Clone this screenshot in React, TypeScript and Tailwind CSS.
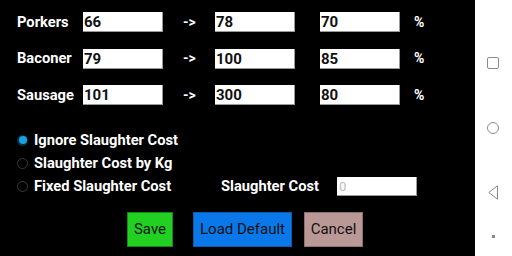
import React from 'react';

const rows = [
  { label: 'Porkers', from: '66', to: '78', pct: '70' },
  { label: 'Baconer', from: '79', to: '100', pct: '85' },
  { label: 'Sausage', from: '101', to: '300', pct: '80' },
];

const Field: React.FC<{ value: string; className?: string }> = ({ value, className = '' }) => (
  <div
    className={`h-5 w-20 bg-white border-b border-r border-[#9a9a9a] pl-px text-[15px] font-bold leading-5 text-[#111] ${className}`}
  >
    {value}
  </div>
);

const Radio: React.FC<{ checked?: boolean; label: string }> = ({ checked, label }) => (
  <div className="flex items-center gap-[6px]">
    {checked ? (
      <span className="flex h-[11px] w-[11px] items-center justify-center rounded-full bg-[#0b2f3f]">
        <span className="h-[8px] w-[8px] rounded-full bg-[#1aa0e0]" />
      </span>
    ) : (
      <span className="h-[11px] w-[11px] rounded-full border border-[#3a3a3a]" />
    )}
    <span className="text-[14.7px] font-bold text-white">{label}</span>
  </div>
);

export default function App() {
  return (
    <div className="flex h-[256px] w-[512px] font-['Roboto',sans-serif]">
      <div className="flex w-[475px] flex-col bg-black pl-[17px] pt-[12px]">
        <div className="flex flex-col gap-[16.5px]">
          {rows.map((r) => (
            <div key={r.label} className="flex h-5 items-center">
              <span className="w-[66px] text-[14.7px] font-bold text-white">{r.label}</span>
              <Field value={r.from} />
              <span className="w-[52px] pl-5 text-[14px] font-bold text-white">-&gt;</span>
              <Field value={r.to} />
              <Field value={r.pct} className="ml-[25px]" />
              <span className="ml-[14px] text-[14px] font-bold text-white">%</span>
            </div>
          ))}
        </div>

        <div className="mt-[24px] flex flex-col">
          <div className="flex h-[23px] items-center">
            <Radio checked label="Ignore Slaughter Cost" />
          </div>
          <div className="flex h-[23px] items-center">
            <Radio label="Slaughter Cost by Kg" />
          </div>
          <div className="flex h-[23px] items-center">
            <div className="w-[204px]">
              <Radio label="Fixed Slaughter Cost" />
            </div>
            <span className="w-[116px] text-[14.7px] font-bold text-white">Slaughter Cost</span>
            <div className="h-[19px] w-20 bg-white border-b border-r border-[#9a9a9a] pl-[2px] text-[13px] leading-[19px] text-[#bbb]">
              0
            </div>
          </div>
        </div>

        <div className="mt-[14px] flex pl-[110px]">
          <button className="h-[35px] w-[46px] border border-[#128a12] bg-[#22d022] text-[15px] text-[#111]">
            Save
          </button>
          <button className="ml-[20px] h-[35px] w-[99px] border border-[#0a5cb0] bg-[#0a78e8] text-[15px] text-[#111]">
            Load Default
          </button>
          <button className="ml-[12px] h-[35px] w-[59px] border border-[#8a7270] bg-[#b99896] text-[15px] text-[#111]">
            Cancel
          </button>
        </div>
      </div>

      <div className="relative flex-1 bg-white">
        <svg className="absolute left-[12px] top-[57px]" width="12" height="12" viewBox="0 0 12 12">
          <rect x="0.5" y="0.5" width="11" height="11" rx="1.5" fill="none" stroke="#8a8a8a" strokeWidth="1" />
        </svg>
        <svg className="absolute left-[12px] top-[122px]" width="12" height="12" viewBox="0 0 12 12">
          <circle cx="6" cy="6" r="5.5" fill="none" stroke="#8a8a8a" strokeWidth="1" />
        </svg>
        <svg className="absolute left-[13px] top-[185px]" width="10" height="15" viewBox="0 0 10 15">
          <path d="M9.5 0.8 L0.8 7.5 L9.5 14.2 Z" fill="none" stroke="#8a8a8a" strokeWidth="1" strokeLinejoin="round" />
        </svg>
        <div className="absolute left-[17px] top-[235px] h-[3px] w-[3px] bg-[#8a8a8a]" />
      </div>
    </div>
  );
}
